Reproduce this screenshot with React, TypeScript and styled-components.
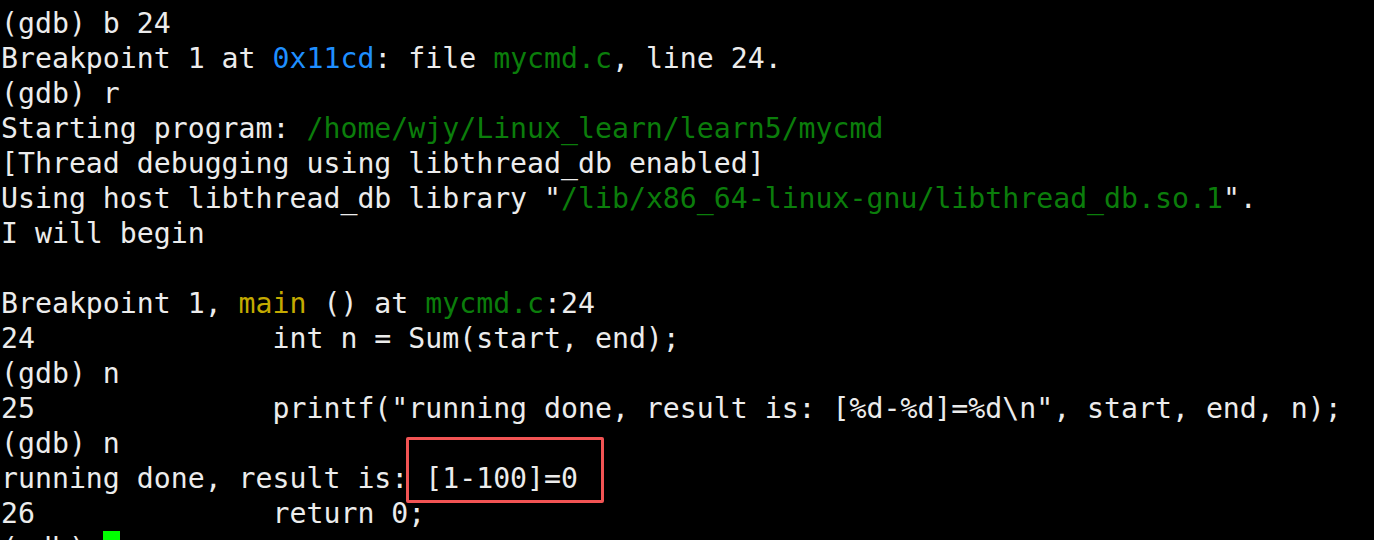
import React from "react";
import styled, { createGlobalStyle } from "styled-components";

const Global = createGlobalStyle`
  html, body { margin: 0; padding: 0; background: #000; }
  body { width: 1374px; height: 540px; overflow: hidden; }
`;

const Terminal = styled.div`
  position: relative;
  width: 1374px;
  height: 540px;
  background: #000;
  padding: 6px 0 0 1px;
  box-sizing: border-box;
  overflow: hidden;
  font-family: "DejaVu Sans Mono", "Liberation Mono", monospace;
  font-size: 28.2px;
  line-height: 35px;
  color: #ececec;
`;

const Line = styled.div`
  white-space: pre;
  height: 35px;
`;

type Tone = "blue" | "green" | "yellow";
const toneColor: Record<Tone, string> = {
  blue: "#1f8fff",
  green: "#0b7d0b",
  yellow: "#c4aa00",
};

const C = styled.span<{ $tone: Tone }>`
  color: ${(p) => toneColor[p.$tone]};
`;

const Cursor = styled.span`
  display: inline-block;
  width: 17px;
  height: 35px;
  vertical-align: top;
  background: #00ff00;
`;

const Highlight = styled.div`
  position: absolute;
  left: 406px;
  top: 437px;
  width: 198px;
  height: 66px;
  box-sizing: border-box;
  border: 3px solid #f25454;
  border-radius: 2px;
`;

export default function App() {
  return (
    <>
      <Global />
      <Terminal>
        <Line>(gdb) b 24</Line>
        <Line>
          Breakpoint 1 at <C $tone="blue">0x11cd</C>: file <C $tone="green">mycmd.c</C>, line 24.
        </Line>
        <Line>(gdb) r</Line>
        <Line>
          Starting program: <C $tone="green">/home/wjy/Linux_learn/learn5/mycmd</C>
        </Line>
        <Line>[Thread debugging using libthread_db enabled]</Line>
        <Line>
          Using host libthread_db library "<C $tone="green">/lib/x86_64-linux-gnu/libthread_db.so.1</C>".
        </Line>
        <Line>I will begin</Line>
        <Line> </Line>
        <Line>
          Breakpoint 1, <C $tone="yellow">main</C> () at <C $tone="green">mycmd.c</C>:24
        </Line>
        <Line>{"24              int n = Sum(start, end);"}</Line>
        <Line>(gdb) n</Line>
        <Line>{'25              printf("running done, result is: [%d-%d]=%d\\n", start, end, n);'}</Line>
        <Line>(gdb) n</Line>
        <Line>running done, result is: [1-100]=0</Line>
        <Line>{"26              return 0;"}</Line>
        <Line>
          {"(gdb) "}
          <Cursor />
        </Line>
        <Highlight />
      </Terminal>
    </>
  );
}
